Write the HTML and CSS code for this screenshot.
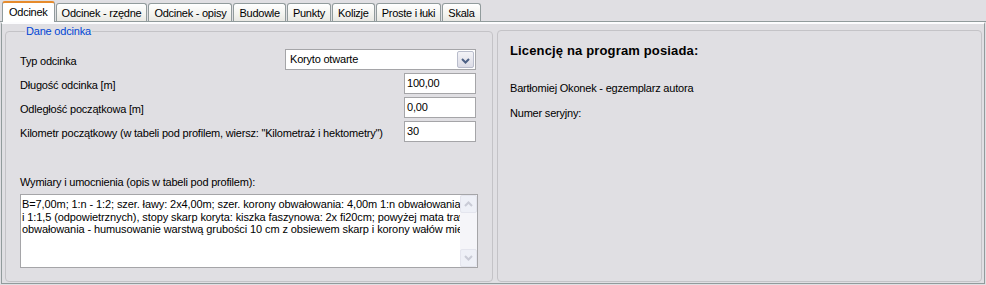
FILE: index.html
```html
<html>
<head>
    <title>Odcinek</title>
    <meta charset="UTF-8">
    <link rel="stylesheet" href="styles.css">
</head>
<body>
    <div class="tabs">
        <div class="tab active">Odcinek</div>
        <div class="tab">Odcinek - rzędne</div>
        <div class="tab">Odcinek - opisy</div>
        <div class="tab">Budowle</div>
        <div class="tab">Punkty</div>
        <div class="tab">Kolizje</div>
        <div class="tab">Proste i łuki</div>
        <div class="tab">Skala</div>
    </div>
    <div class="page">
        <fieldset class="group">
            <legend>Dane odcinka</legend>
            <div class="rows">
                <div class="row">
                    <span>Typ odcinka</span>
                    <div class="combo">
                        <span class="combo-text">Koryto otwarte</span>
                        <span class="combo-btn">
                            <svg width="9" height="6" viewBox="0 0 9 6"><path d="M1 1 L4.5 4.5 L8 1" fill="none" stroke="#4d6185" stroke-width="2"/></svg>
                        </span>
                    </div>
                </div>
                <div class="row">
                    <span>Długość odcinka [m]</span>
                    <div class="edit">100,00</div>
                </div>
                <div class="row">
                    <span>Odległość początkowa [m]</span>
                    <div class="edit">0,00</div>
                </div>
                <div class="row">
                    <span>Kilometr początkowy (w tabeli pod profilem, wiersz: "Kilometraż i hektometry")</span>
                    <div class="edit">30</div>
                </div>
            </div>
            <div class="memo-label">Wymiary i umocnienia (opis w tabeli pod profilem):</div>
            <div class="memo">
                <div class="memo-text">
                    <div>B=7,00m; 1:n - 1:2; szer. ławy: 2x4,00m; szer. korony obwałowania: 4,00m 1:n obwałowania</div>
                    <div>i 1:1,5 (odpowietrznych), stopy skarp koryta: kiszka faszynowa: 2x fi20cm; powyżej mata trawiasta</div>
                    <div>obwałowania - humusowanie warstwą grubości 10 cm z obsiewem skarp i korony wałów mieszanką</div>
                </div>
                <div class="scroll">
                    <span class="scroll-btn">
                        <svg width="9" height="6" viewBox="0 0 9 6"><path d="M1 5 L4.5 1.5 L8 5" fill="none" stroke="#c9cbd6" stroke-width="2"/></svg>
                    </span>
                    <span class="scroll-track"></span>
                    <span class="scroll-btn">
                        <svg width="9" height="6" viewBox="0 0 9 6"><path d="M1 1 L4.5 4.5 L8 1" fill="none" stroke="#c9cbd6" stroke-width="2"/></svg>
                    </span>
                </div>
            </div>
        </fieldset>
        <div class="group licence">
            <h3>Licencję na program posiada:</h3>
            <p>Bartłomiej Okonek - egzemplarz autora</p>
            <p>Numer seryjny:</p>
        </div>
    </div>
</body>
</html>
```

FILE: styles.css
```css
body {
    margin: 0;
    font-family: "Liberation Sans", Arial, sans-serif;
    font-size: 11px;
    letter-spacing: -0.2px;
    color: #000;
    background-color: #e0dfe3;
}

/* tab strip */
.tabs {
    display: flex;
    align-items: flex-end;
    height: 21px;
    padding-left: 2px;
    border-bottom: 1px solid #919b9c;
}

.tab {
    height: 17px;
    line-height: 18px;
    padding: 0 5px;
    margin-right: 1px;
    border: 1px solid #919b9c;
    border-bottom: none;
    border-radius: 3px 3px 0 0;
    letter-spacing: -0.25px;
    background: linear-gradient(#ffffff, #f3f3ef 60%, #e9e8e3);
}

    .tab.active {
        height: 19px;
        line-height: 19px;
        padding: 0 6px;
        margin-bottom: -1px;
        border-top: 2px solid #e68b2c;
        background: #fff;
    }

/* tab page */
.page {
    display: flex;
    gap: 4px;
    height: 262px;
    margin: 0 1px;
    padding: 0 2px 1px 3px;
    border: 1px solid #919b9c;
    border-top: 2px solid #fcfcfe;
    box-sizing: border-box;
}

.group {
    margin: 0;
    padding: 0 16px 0 14px;
    border: 1px solid #c4c3c7;
    border-radius: 4px;
    box-sizing: border-box;
}

fieldset.group {
    width: 488px;
    min-width: 0;
}

    fieldset.group legend {
        margin-left: 5px;
        padding: 0 1px;
        line-height: 14px;
        color: #0046d5;
    }

.rows {
    display: flex;
    flex-direction: column;
    gap: 3px;
    margin-top: 11px;
}

.row {
    display: flex;
    justify-content: space-between;
    align-items: center;
    height: 21px;
}

    .row span {
        padding-top: 2px;
    }

.combo {
    display: flex;
    width: 191px;
    height: 21px;
    border: 1px solid #a5a5a8;
    background: #fff;
    box-sizing: border-box;
}

.combo-text {
    flex: 1;
    padding: 3px 0 0 4px !important;
}

.combo-btn {
    display: flex;
    align-items: center;
    justify-content: center;
    width: 15px;
    margin: 1px;
    border: 1px solid #b9bdcc;
    border-radius: 2px;
    background: linear-gradient(#f3f3f7, #dcdce6);
}

.edit {
    width: 72px;
    height: 21px;
    padding: 3px 0 0 2px;
    border: 1px solid #a5a5a8;
    background: #fff;
    box-sizing: border-box;
}

.memo-label {
    margin-top: 34px;
    line-height: 13px;
}

.memo {
    display: flex;
    height: 74px;
    margin: 5px -2px 0 0;
    border: 1px solid #a5a5a8;
    background: #fff;
    box-sizing: border-box;
}

.memo-text {
    flex: 1;
    overflow: hidden;
    padding: 3px 0 0 1px;
    line-height: 12.5px;
    letter-spacing: -0.1px;
    white-space: nowrap;
}

.scroll {
    display: flex;
    flex-direction: column;
    width: 17px;
    background: #f5f5f9;
}

.scroll-btn {
    display: flex;
    align-items: center;
    justify-content: center;
    height: 16px;
    border: 1px solid #e4e5ee;
    border-radius: 2px;
    background: #eef0f7;
}

.scroll-track {
    flex: 1;
}

/* licence box */
.licence {
    flex: 1;
    margin-top: 6px;
    padding: 0 12px;
}

    .licence h3 {
        margin: 12px 0 0 0;
        font-size: 13px;
        letter-spacing: 0.15px;
        line-height: 16px;
    }

    .licence p {
        margin: 23px 0 0 0;
        line-height: 13px;
    }

        .licence p + p {
            margin-top: 12px;
        }
```
